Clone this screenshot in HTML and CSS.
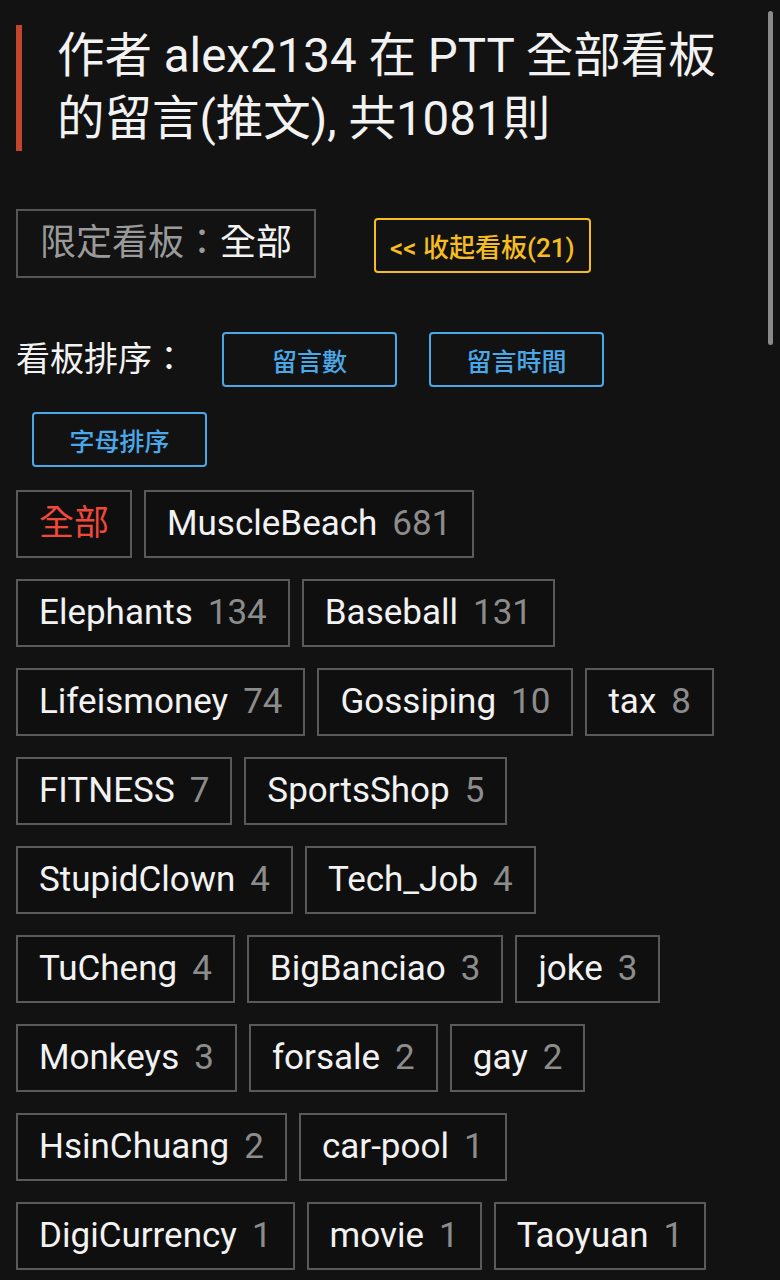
FILE: index.html
```html
<html>
<head>
    <title>alex2134 的留言</title>
    <link rel="stylesheet" href="styles.css">
</head>
<body>
    <div class="page">
        <h1 class="title">作者 alex2134 在 PTT 全部看板的留言(推文), 共1081則</h1>

        <div class="filter-row">
            <div class="filter-box"><span class="filter-label">限定看板：</span>全部</div>
            <button class="btn-collapse">&lt;&lt; 收起看板(21)</button>
        </div>

        <div class="sort-row">
            <span class="sort-label">看板排序：</span>
            <button class="btn-sort">留言數</button>
            <button class="btn-sort">留言時間</button>
            <button class="btn-sort">字母排序</button>
        </div>

        <div class="boards">
            <a class="board active">全部</a>
            <a class="board">MuscleBeach<span class="count">681</span></a>
            <a class="board">Elephants<span class="count">134</span></a>
            <a class="board">Baseball<span class="count">131</span></a>
            <a class="board">Lifeismoney<span class="count">74</span></a>
            <a class="board">Gossiping<span class="count">10</span></a>
            <a class="board">tax<span class="count">8</span></a>
            <a class="board">FITNESS<span class="count">7</span></a>
            <a class="board">SportsShop<span class="count">5</span></a>
            <a class="board">StupidClown<span class="count">4</span></a>
            <a class="board">Tech_Job<span class="count">4</span></a>
            <a class="board">TuCheng<span class="count">4</span></a>
            <a class="board">BigBanciao<span class="count">3</span></a>
            <a class="board">joke<span class="count">3</span></a>
            <a class="board">Monkeys<span class="count">3</span></a>
            <a class="board">forsale<span class="count">2</span></a>
            <a class="board">gay<span class="count">2</span></a>
            <a class="board">HsinChuang<span class="count">2</span></a>
            <a class="board">car-pool<span class="count">1</span></a>
            <a class="board">DigiCurrency<span class="count">1</span></a>
            <a class="board">movie<span class="count">1</span></a>
            <a class="board">Taoyuan<span class="count">1</span></a>
        </div>
    </div>
    <div class="scroll-thumb"></div>
</body>
</html>
```

FILE: styles.css
```css
body {
    margin: 0;
    background: #121212;
    color: #f2f2f2;
    font-family: Roboto, "Noto Sans CJK TC", sans-serif;
    overflow: hidden;
}
.page {
    padding: 25px 32px 0 16px;
}
.title {
    margin: 0;
    border-left: 6px solid #c1462b;
    padding-left: 35px;
    font-size: 47.5px;
    font-weight: normal;
    line-height: 63px;
}
.filter-row {
    display: flex;
    align-items: center;
    gap: 58px;
    margin-top: 58px;
}
.filter-box {
    border: 2px solid #555;
    padding: 5px 22px;
    font-size: 36px;
    line-height: 55px;
    color: #f2f2f2;
}
.filter-label {
    color: #9a9a9a;
}
button {
    font-family: Roboto, "Noto Sans CJK TC", sans-serif;
    font-weight: 500;
    background: transparent;
    cursor: pointer;
}
.btn-collapse {
    height: 55px;
    padding: 0 14px;
    margin-top: 4px;
    border: 2px solid #f5bd1f;
    border-radius: 4px;
    color: #f5bd1f;
    font-size: 26px;
}
.sort-row {
    display: flex;
    flex-wrap: wrap;
    align-items: center;
    row-gap: 25px;
    margin-top: 54px;
}
.sort-label {
    font-size: 34px;
    line-height: 55px;
    margin-right: 20px;
}
.btn-sort {
    width: 175px;
    height: 55px;
    margin: 0 16px;
    border: 2px solid #4aa8e8;
    border-radius: 4px;
    color: #4aa8e8;
    font-size: 25px;
}
.boards {
    display: flex;
    flex-wrap: wrap;
    gap: 21px 12px;
    margin-top: 23px;
}
.board {
    border: 2px solid #5a5a5a;
    padding: 6px 21px;
    font-size: 35px;
    line-height: 52px;
    color: #f2f2f2;
    background: #0f0f0f;
}
.board.active {
    color: #f0483a;
}
.count {
    margin-left: 15px;
    color: #8c8c8c;
}
.scroll-thumb {
    position: absolute;
    top: 11px;
    right: 7px;
    width: 5px;
    height: 334px;
    border-radius: 3px;
    background: #8a8a8a;
}
```
